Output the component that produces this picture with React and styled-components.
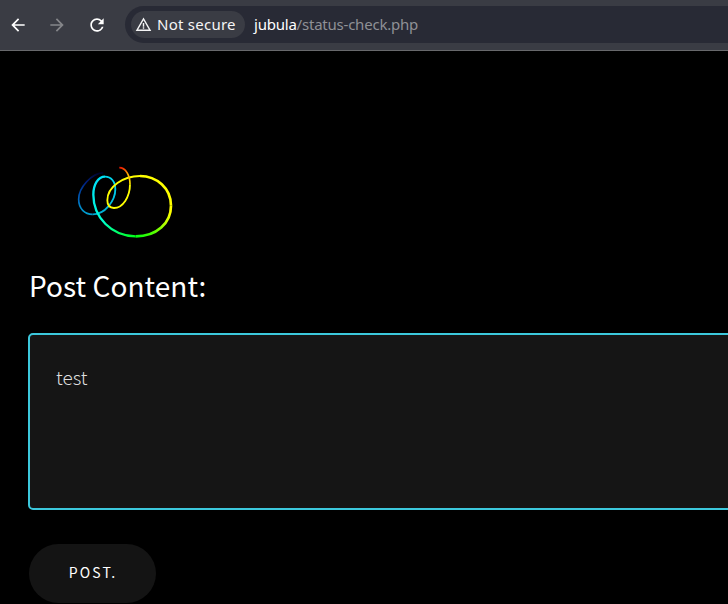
import React from "react";
import styled, { createGlobalStyle } from "styled-components";
import { MdArrowBack, MdArrowForward, MdRefresh, MdWarningAmber } from "react-icons/md";

const GlobalStyle = createGlobalStyle`
  * { box-sizing: border-box; }
  body { margin: 0; background: #000; overflow: hidden; }
`;

const Window = styled.div`
  width: 100%;
  height: 604px;
  overflow: hidden;
  background: #000;
  color: #fff;
`;

const Toolbar = styled.header`
  display: flex;
  align-items: center;
  height: 51px;
  padding: 0 0 1px 8px;
  background: #3a3c44;
  border-bottom: 1px solid #68696c;
`;

const NavButton = styled.button`
  display: flex;
  align-items: center;
  justify-content: center;
  flex: none;
  width: 20px;
  height: 20px;
  margin: 1px ${(p) => p.$gap}px 0 0;
  padding: 0;
  border: 0;
  background: none;
  color: ${(p) => (p.disabled ? "#85868a" : "#fff")};
`;

const AddressBar = styled.div`
  display: flex;
  align-items: center;
  flex: 1;
  height: 37px;
  padding-left: 6px;
  border-radius: 19px 0 0 19px;
  background: #282a35;
  font: 400 15px "Noto Sans", sans-serif;
  white-space: nowrap;
`;

const SecurityChip = styled.div`
  display: flex;
  align-items: center;
  width: 114px;
  height: 27px;
  padding-left: 4px;
  gap: 5px;
  border-radius: 14px;
  background: #3a3c44;
  color: #f5f5f6;
`;

const ChipLabel = styled.span`
  padding-bottom: 2px;
  font-size: 15px;
  letter-spacing: 0.25px;
`;

const Url = styled.span`
  margin-left: 9px;
  padding-bottom: 1px;
  font-size: 15px;
  letter-spacing: -0.22px;
  color: #8f9096;
`;

const Host = styled.span`
  color: #fff;
`;

const Page = styled.main`
  padding: 107px 0 0 28px;
  font-family: "Noto Sans CJK SC", sans-serif;
`;

const Logo = styled.svg`
  display: block;
  margin-left: 42px;
`;

const Form = styled.form`
  display: flex;
  flex-direction: column;
  align-items: flex-start;
  padding-top: 17px;
`;

const Label = styled.label`
  height: 44px;
  margin-left: 1px;
  font-size: 28px;
  line-height: 44px;
  letter-spacing: 0.05px;
`;

const Content = styled.textarea`
  display: block;
  width: 760px;
  height: 177px;
  margin-top: 26px;
  padding: 27px 26px;
  border: 2px solid #3cc8dc;
  border-radius: 5px;
  outline: 0;
  resize: none;
  background: #151515;
  color: #dedede;
  font: 300 19px/30px "Noto Sans CJK SC", sans-serif;
`;

const PostButton = styled.button`
  width: 127px;
  height: 59px;
  margin: 34px 0 0 1px;
  padding: 0 0 3px 1px;
  border: 0;
  border-radius: 30px;
  background: #141414;
  color: #fff;
  font: 400 14px "Noto Sans CJK SC", sans-serif;
  letter-spacing: 2.1px;
`;

const RibbonLogo = () => (
  <Logo width="110" height="88" viewBox="0 0 330 264" fill="none">
    <defs>
      <linearGradient id="blue" gradientUnits="userSpaceOnUse" x1="88" y1="43" x2="60" y2="170">
        <stop offset="0" stopColor="#000020" />
        <stop offset="0.3" stopColor="#002080" />
        <stop offset="0.7" stopColor="#0060b8" />
        <stop offset="1" stopColor="#00a0d0" />
      </linearGradient>
      <linearGradient id="cyan" gradientUnits="userSpaceOnUse" x1="68" y1="169" x2="125" y2="60">
        <stop stopColor="#00a8d0" />
        <stop offset="1" stopColor="#00d8f0" />
      </linearGradient>
      <linearGradient id="green" gradientUnits="userSpaceOnUse" x1="85" y1="55" x2="205" y2="235">
        <stop stopColor="#00dff8" />
        <stop offset="0.55" stopColor="#00ffd0" />
        <stop offset="1" stopColor="#00ff10" />
      </linearGradient>
      <linearGradient id="lime" gradientUnits="userSpaceOnUse" x1="195" y1="235" x2="298" y2="160">
        <stop stopColor="#00ff10" />
        <stop offset="0.4" stopColor="#50ff00" />
        <stop offset="1" stopColor="#ffff00" />
      </linearGradient>
      <linearGradient id="flame" gradientUnits="userSpaceOnUse" x1="170" y1="85" x2="150" y2="29">
        <stop stopColor="#ffe800" />
        <stop offset="0.55" stopColor="#ffb000" />
        <stop offset="1" stopColor="#f01800" />
      </linearGradient>
    </defs>
    <path d="M100 44C65 46 26 88 26 124C26 152 44 169 68 169" stroke="url(#blue)" strokeWidth="5" />
    <path d="M68 169C105 169 136 128 136 94C136 70 123 56 105 56" stroke="url(#cyan)" strokeWidth="5.5" />
    <path d="M105 56C84 56 70 80 70 110C70 178 125 235 197 235" stroke="url(#green)" strokeWidth="7" />
    <path d="M197 235C260 235 303 195 303 143" stroke="url(#lime)" strokeWidth="8" />
    <path d="M303 143C303 91 260 54 210 54" stroke="#ff0" strokeWidth="8" />
    <path d="M210 54C160 54 112 86 112 127C112 142 120 150 132 150C158 150 180 117 180 79" stroke="#ffff00" strokeWidth="5.5" />
    <path d="M180 79C180 52 167 29 148 29" stroke="url(#flame)" strokeWidth="5" />
  </Logo>
);

export default function App() {
  return (
    <Window>
      <GlobalStyle />
      <Toolbar>
        <NavButton $gap={19} aria-label="Back">
          <MdArrowBack size={20} />
        </NavButton>
        <NavButton $gap={20} disabled aria-label="Forward">
          <MdArrowForward size={20} />
        </NavButton>
        <NavButton $gap={18} aria-label="Reload">
          <MdRefresh size={20} />
        </NavButton>
        <AddressBar>
          <SecurityChip>
            <MdWarningAmber size={17} />
            <ChipLabel>Not secure</ChipLabel>
          </SecurityChip>
          <Url><Host>jubula</Host>/status-check.php</Url>
        </AddressBar>
      </Toolbar>
      <Page>
        <RibbonLogo />
        <Form>
          <Label htmlFor="content">Post Content:</Label>
          <Content id="content" defaultValue="test" spellCheck={false} />
          <PostButton type="button">POST.</PostButton>
        </Form>
      </Page>
    </Window>
  );
}
